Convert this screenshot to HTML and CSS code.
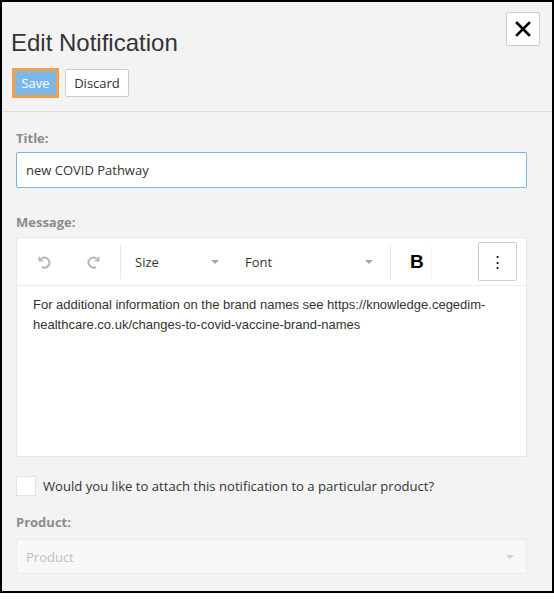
FILE: index.html
```html
<!DOCTYPE html>
<html lang="en">
<head>
    <meta charset="UTF-8">
    <title>Edit Notification</title>
    <link rel="stylesheet" href="styles.css">
</head>
<body>
    <div class="dialog">
        <div class="header">
            <h1>Edit Notification</h1>
            <button class="close-btn" title="Close">
                <svg width="16" height="16" viewBox="0 0 16 16"><path d="M2 2 L14 14 M14 2 L2 14" stroke="#000" stroke-width="2.6" stroke-linecap="square"/></svg>
            </button>
        </div>
        <div class="actions">
            <button class="btn btn-save">Save</button>
            <button class="btn btn-discard">Discard</button>
        </div>

        <div class="form">
            <label class="field-label">Title:</label>
            <input type="text" class="text-input" value="new COVID Pathway">

            <label class="field-label message-label">Message:</label>
            <div class="editor">
                <div class="toolbar">
                    <div class="tool-group history">
                        <span class="tool-icon">
                            <svg width="16" height="16" viewBox="0 0 16 16"><path d="M4.5 4.5 A5 5 0 1 1 5 13" fill="none" stroke="#b5b5b5" stroke-width="2"/><path d="M1.5 2 L1.5 7.5 L7 7.5 Z" fill="#b5b5b5"/></svg>
                        </span>
                        <span class="tool-icon">
                            <svg width="16" height="16" viewBox="0 0 16 16"><path d="M11.5 4.5 A5 5 0 1 0 11 13" fill="none" stroke="#b5b5b5" stroke-width="2"/><path d="M14.5 2 L14.5 7.5 L9 7.5 Z" fill="#b5b5b5"/></svg>
                        </span>
                    </div>
                    <div class="tool-group selects">
                        <div class="tool-select size-select">Size<span class="caret"></span></div>
                        <div class="tool-select font-select">Font<span class="caret"></span></div>
                    </div>
                    <div class="tool-group format">
                        <span class="bold-btn">B</span>
                    </div>
                    <button class="more-btn">&#8942;</button>
                </div>
                <div class="editor-content">
                    For additional information on the brand names see https://knowledge.cegedim-healthcare.co.uk/changes-to-covid-vaccine-brand-names
                </div>
            </div>

            <label class="check-row">
                <span class="checkbox"></span>
                Would you like to attach this notification to a particular product?
            </label>

            <label class="field-label product-label">Product:</label>
            <div class="select-input disabled">
                Product
                <span class="caret"></span>
            </div>
        </div>
    </div>
</body>
</html>
```

FILE: styles.css
```css
* {
    box-sizing: border-box;
}

body {
    margin: 0;
    background: #fff;
    font-family: "Open Sans", "Noto Sans", sans-serif;
    color: #333;
}

.dialog {
    width: 554px;
    height: 593px;
    border: 2px solid #000;
    background: #f3f3f3;
}

.header {
    display: flex;
    justify-content: space-between;
    align-items: flex-start;
    padding: 10px 12px 0 9px;
}

.header h1 {
    margin: 17px 0 0;
    font-family: "Liberation Sans", Arial, sans-serif;
    font-size: 24px;
    font-weight: normal;
    line-height: 28px;
    color: #333;
}

.close-btn {
    width: 34px;
    height: 34px;
    padding: 0;
    border: 1px solid #ccc;
    border-radius: 2px;
    background: #fff;
    display: flex;
    align-items: center;
    justify-content: center;
}

.actions {
    display: flex;
    align-items: center;
    gap: 6px;
    padding: 11px 0 13px 10px;
    border-bottom: 1px solid #dcdcdc;
}

.btn {
    font-family: "Open Sans", sans-serif;
    font-size: 13px;
    height: 28px;
    padding: 0 9px;
    border-radius: 2px;
}

.btn-save {
    height: 30px;
    width: 47px;
    padding: 0;
    background: #7cb7ea;
    color: #fff;
    border: 3px solid #f59f4b;
    border-radius: 0;
}

.btn-discard {
    width: 64px;
    padding: 0;
    background: #fff;
    color: #333;
    border: 1px solid #ccc;
}

.form {
    display: flex;
    flex-direction: column;
    padding: 17px 25px 0 14px;
}

.field-label {
    font-size: 13px;
    font-weight: bold;
    color: #8c8c8c;
    line-height: 18px;
    margin-bottom: 5px;
}

.text-input {
    height: 36px;
    border: 1px solid #7ab4e6;
    border-radius: 2px;
    padding: 0 9px;
    font-family: "Open Sans", sans-serif;
    font-size: 13px;
    color: #333;
    background: #fff;
    outline: none;
}

.message-label {
    margin-top: 25px;
    margin-bottom: 6px;
}

.editor {
    height: 220px;
    background: #fff;
    border: 1px solid #e6e6e6;
}

.toolbar {
    display: flex;
    align-items: center;
    height: 48px;
    border-bottom: 1px solid #ececec;
    padding: 0 9px 0 0;
}

.tool-group {
    display: flex;
    align-items: center;
    height: 34px;
}

.history {
    width: 104px;
    padding-left: 20px;
    gap: 32px;
    border-right: 1px solid #e6e6e6;
}

.tool-icon {
    display: flex;
}

.selects {
    padding-left: 14px;
    border-right: 1px solid #e6e6e6;
}

.tool-select {
    display: flex;
    align-items: center;
    justify-content: space-between;
    font-size: 13px;
    color: #333;
}

.size-select {
    width: 84px;
}

.font-select {
    width: 128px;
    margin-left: 26px;
    margin-right: 17px;
}

.caret {
    width: 0;
    height: 0;
    border-left: 4px solid transparent;
    border-right: 4px solid transparent;
    border-top: 4px solid #a6a6a6;
}

.format {
    width: 41px;
    padding-left: 19px;
    border-right: 1px dotted #eee;
}

.bold-btn {
    font-family: "Liberation Sans", Arial, sans-serif;
    font-weight: bold;
    font-size: 19px;
    color: #000;
}

.more-btn {
    margin-left: auto;
    width: 39px;
    height: 39px;
    padding: 0;
    border: 1px solid #ccc;
    border-radius: 2px;
    background: #fff;
    color: #000;
    font-size: 15px;
}

.editor-content {
    padding: 9px 16px;
    font-family: "Liberation Sans", Arial, sans-serif;
    font-size: 13px;
    line-height: 20px;
    color: #333;
}

.check-row {
    display: flex;
    align-items: center;
    gap: 7px;
    margin-top: 19px;
    font-size: 13.1px;
    color: #333;
}

.checkbox {
    width: 20px;
    height: 20px;
    background: #fff;
    border: 1px solid #e2e2e2;
}

.product-label {
    margin-top: 17px;
    margin-bottom: 8px;
}

.select-input {
    display: flex;
    align-items: center;
    justify-content: space-between;
    height: 35px;
    padding: 0 12px 0 9px;
    border: 1px solid #ececec;
    border-radius: 2px;
    font-size: 13px;
}

.select-input.disabled {
    background: #f8f8f8;
    color: #bdbdbd;
}

.select-input .caret {
    border-top-color: #d0d0d0;
}
```
